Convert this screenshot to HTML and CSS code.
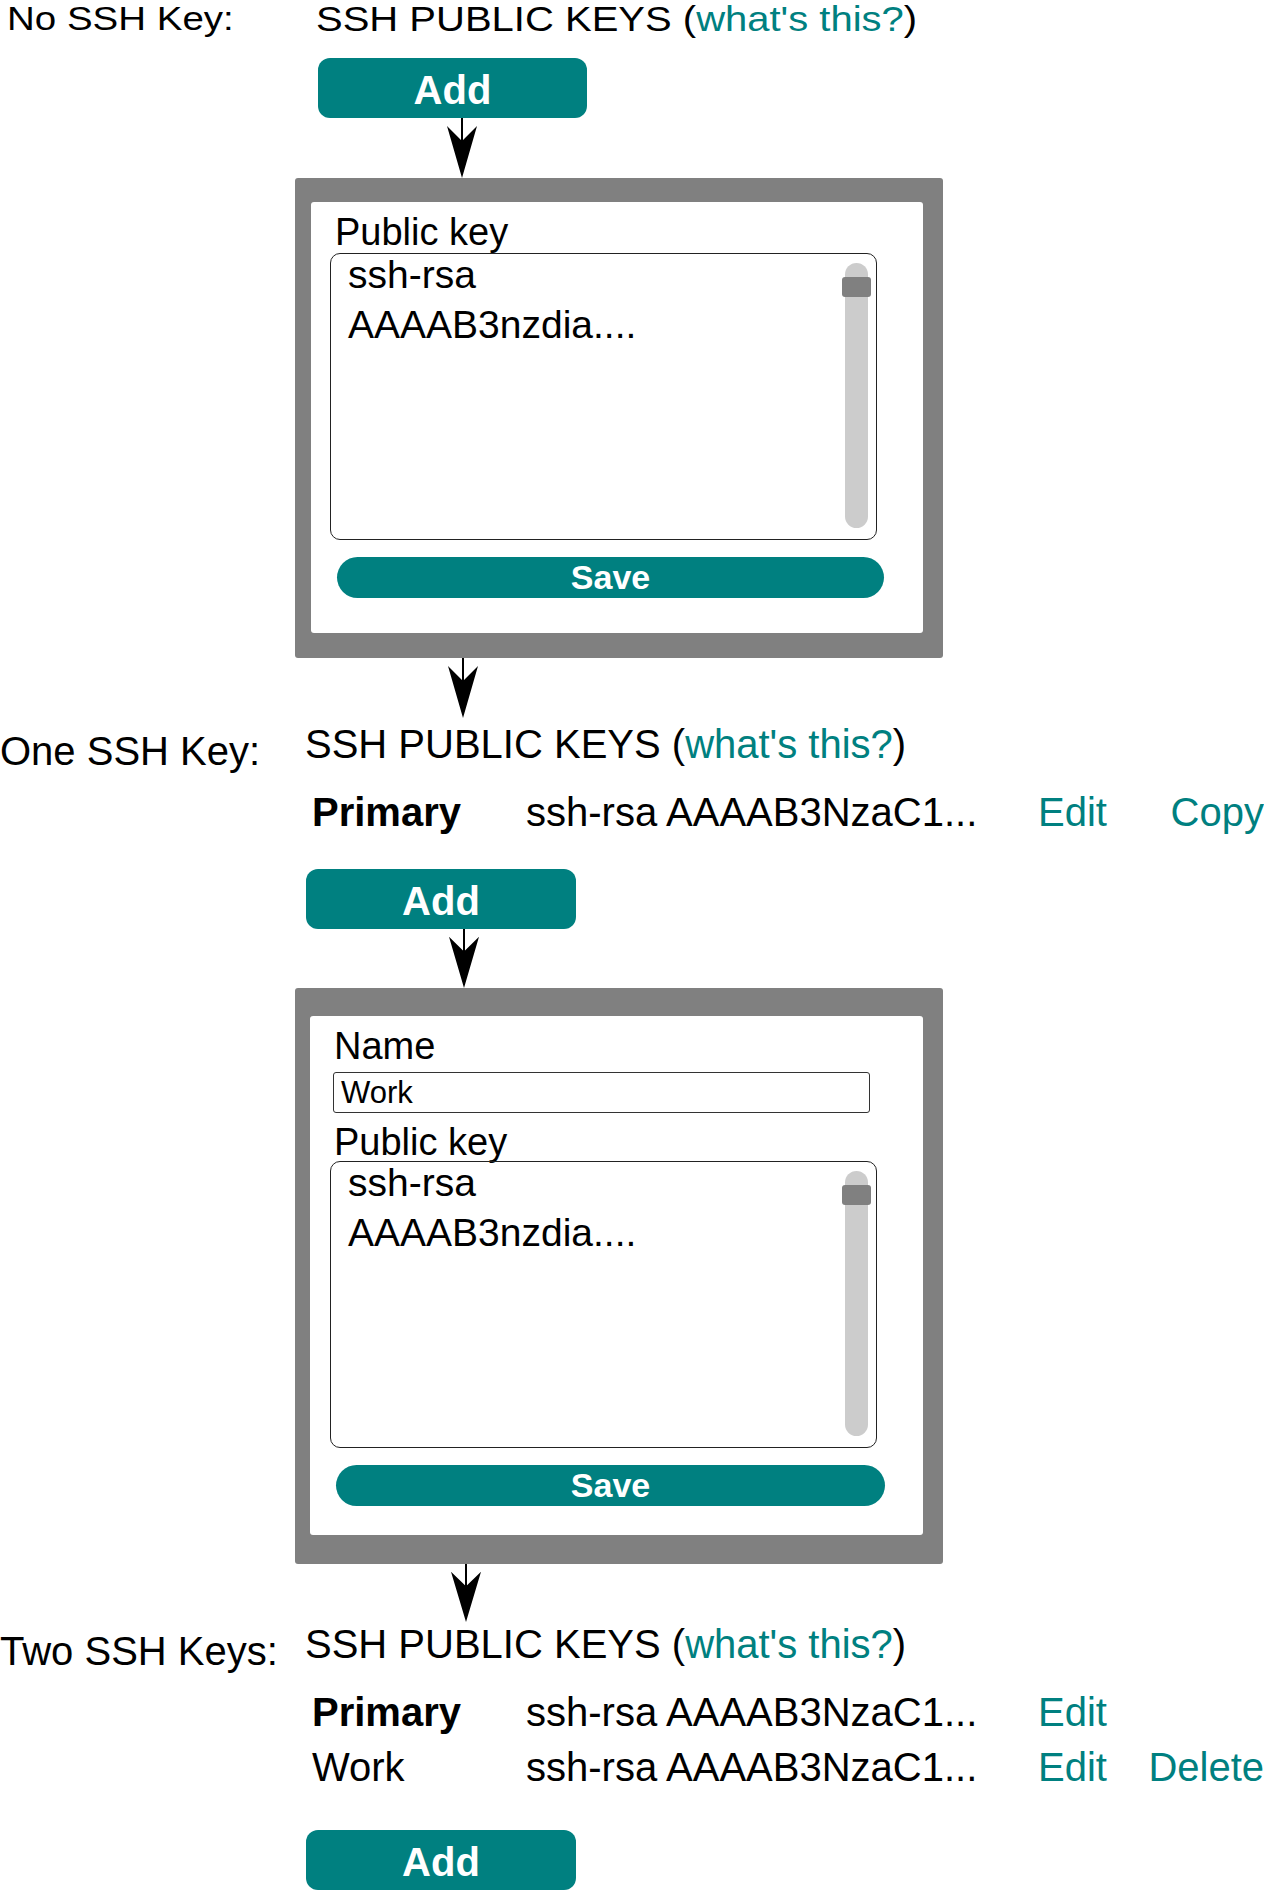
FILE: index.html
```html
<!DOCTYPE html>
<html lang="en">
<head>
<meta charset="utf-8">
<title>SSH public keys – states</title>
<link rel="stylesheet" href="styles.css">
</head>
<body>
<main class="page">

  <section class="state state--none">
    <div class="state-head">
      <span class="state-label">No SSH Key:</span>
      <h2 class="keys-title">SSH PUBLIC KEYS (<a class="link" href="#">what's this?</a>)</h2>
    </div>
    <button class="btn-add" type="button">Add</button>
    <svg class="arrow arrow--a" viewBox="0 0 32 60" preserveAspectRatio="none" aria-hidden="true">
      <line x1="16" y1="0" x2="16" y2="26" stroke="#000" stroke-width="2"/>
      <polygon points="16,60 1,8 16,23 31,8" fill="#000"/>
    </svg>
    <div class="dialog dialog--key">
      <div class="dialog-body">
        <label class="field-label field-label--first">Public key</label>
        <div class="keybox">
          <div class="keybox-text">
            <div class="keybox-line">ssh-rsa</div>
            <div class="keybox-line keybox-line--next">AAAAB3nzdia....</div>
          </div>
          <div class="scroll-track"><div class="scroll-thumb"></div></div>
        </div>
        <button class="btn-save" type="button">Save</button>
      </div>
    </div>
    <svg class="arrow arrow--b" viewBox="0 0 32 60" preserveAspectRatio="none" aria-hidden="true">
      <line x1="16" y1="0" x2="16" y2="26" stroke="#000" stroke-width="2"/>
      <polygon points="16,60 1,8 16,23 31,8" fill="#000"/>
    </svg>
  </section>

  <section class="state state--one">
    <div class="state-head">
      <span class="state-label">One SSH Key:</span>
      <h2 class="keys-title">SSH PUBLIC KEYS (<a class="link" href="#">what's this?</a>)</h2>
    </div>
    <div class="key-list">
      <div class="key-row">
        <span class="key-name key-name--primary">Primary</span>
        <span class="key-value">ssh-rsa AAAAB3NzaC1...</span>
        <a class="key-action" href="#">Edit</a>
        <a class="key-action key-action--end" href="#">Copy</a>
      </div>
    </div>
    <button class="btn-add btn-add--list" type="button">Add</button>
    <svg class="arrow arrow--c" viewBox="0 0 32 60" preserveAspectRatio="none" aria-hidden="true">
      <line x1="16" y1="0" x2="16" y2="26" stroke="#000" stroke-width="2"/>
      <polygon points="16,60 1,8 16,23 31,8" fill="#000"/>
    </svg>
    <div class="dialog dialog--named">
      <div class="dialog-body dialog-body--named">
        <label class="field-label">Name</label>
        <div class="name-input">Work</div>
        <label class="field-label field-label--key">Public key</label>
        <div class="keybox keybox--named">
          <div class="keybox-text">
            <div class="keybox-line">ssh-rsa</div>
            <div class="keybox-line keybox-line--next">AAAAB3nzdia....</div>
          </div>
          <div class="scroll-track"><div class="scroll-thumb"></div></div>
        </div>
        <button class="btn-save" type="button">Save</button>
      </div>
    </div>
    <svg class="arrow arrow--d" viewBox="0 0 32 60" preserveAspectRatio="none" aria-hidden="true">
      <line x1="16" y1="0" x2="16" y2="26" stroke="#000" stroke-width="2"/>
      <polygon points="16,60 1,8 16,23 31,8" fill="#000"/>
    </svg>
  </section>

  <section class="state state--two">
    <div class="state-head">
      <span class="state-label">Two SSH Keys:</span>
      <h2 class="keys-title">SSH PUBLIC KEYS (<a class="link" href="#">what's this?</a>)</h2>
    </div>
    <div class="key-list">
      <div class="key-row">
        <span class="key-name key-name--primary">Primary</span>
        <span class="key-value">ssh-rsa AAAAB3NzaC1...</span>
        <a class="key-action" href="#">Edit</a>
      </div>
      <div class="key-row">
        <span class="key-name">Work</span>
        <span class="key-value">ssh-rsa AAAAB3NzaC1...</span>
        <a class="key-action" href="#">Edit</a>
        <a class="key-action key-action--end" href="#">Delete</a>
      </div>
    </div>
    <button class="btn-add btn-add--list btn-add--last" type="button">Add</button>
  </section>

</main>
</body>
</html>
```

FILE: styles.css
```css
* { box-sizing: border-box; }

html, body {
  margin: 0;
  padding: 0;
  background: #fff;
}

body {
  width: 1264px;
  height: 1890px;
  overflow: hidden;
  font-family: "Liberation Sans", Arial, Helvetica, sans-serif;
  color: #000;
}

.page {
  display: flex;
  flex-direction: column;
}

.state {
  display: flex;
  flex-direction: column;
  align-items: flex-start;
}

/* ---------- header row ---------- */
.state-head {
  display: flex;
  align-items: flex-start;
  height: 40px;
  white-space: nowrap;
}

.state-label {
  width: 305px;
  padding-top: 7px;
  font-size: 40px;
  line-height: 40px;
}

.keys-title {
  margin: 0;
  font-weight: normal;
  font-size: 40px;
  line-height: 40px;
}

.link {
  color: #008080;
  text-decoration: none;
}

/* the first state's heading is drawn a little flatter in the mock-up */
.state--none .state-head {
  padding-left: 7px;
  transform: scaleY(0.86);
  transform-origin: top left;
}
.state--none .state-label {
  width: 309px;
  padding-top: 0;
  font-size: 38.5px;
  line-height: 43px;
}
.state--none .keys-title {
  font-size: 40px;
  line-height: 45px;
}

.state--one .state-head { margin-top: 6px; }
.state--two .state-head { margin-top: 2px; }

/* ---------- key list ---------- */
.key-list {
  display: flex;
  flex-direction: column;
  gap: 15px;
  width: 952px;
  margin: 28px 0 0 312px;
}

.key-row {
  display: flex;
  font-size: 40px;
  line-height: 40px;
  white-space: nowrap;
}

.key-name { width: 214px; }
.key-name--primary { font-weight: bold; }
.key-value { width: 512px; }

.key-action {
  color: #008080;
  text-decoration: none;
}
.key-action--end { margin-left: auto; }

/* ---------- buttons ---------- */
.btn-add {
  display: block;
  width: 269px;
  height: 60px;
  margin: 18px 0 0 318px;
  padding: 4px 0 0;
  border: none;
  border-radius: 12px;
  background: #008080;
  color: #fff;
  font-family: inherit;
  font-weight: bold;
  font-size: 40px;
  line-height: 56px;
  text-align: center;
}

.btn-add--list {
  width: 270px;
  margin: 37px 0 0 306px;
}
.btn-add--last { margin-top: 43px; }

.btn-save {
  display: block;
  width: 547px;
  height: 41px;
  margin: 17px 0 0 26px;
  padding: 0;
  border: none;
  border-radius: 21px;
  background: #008080;
  color: #fff;
  font-family: inherit;
  font-weight: bold;
  font-size: 34px;
  line-height: 41px;
  text-align: center;
}

.dialog-body--named .btn-save {
  width: 549px;
  margin-left: 25px;
}

/* ---------- arrows ---------- */
.arrow {
  display: block;
  width: 32px;
  height: 60px;
}
.arrow--a { margin-left: 446px; }
.arrow--b { margin-left: 447px; }
.arrow--c { margin-left: 448px; height: 59px; }
.arrow--d { margin-left: 450px; height: 58px; }

/* ---------- dialog frame ---------- */
.dialog {
  width: 648px;
  margin-left: 295px;
  padding: 24px 20px 25px 16px;
  background: #808080;
  border-radius: 3px;
}

.dialog--named {
  padding: 28px 20px 29px 15px;
}

.dialog-body {
  display: flex;
  flex-direction: column;
  align-items: flex-start;
  padding: 13px 0 35px;
  background: #fff;
  border-radius: 3px;
}

.dialog-body--named {
  padding: 12px 0 29px 1px;
}

.field-label {
  display: block;
  margin-left: 23px;
  font-size: 38px;
  line-height: 36px;
  white-space: nowrap;
}

.field-label--first {
  margin-left: 24px;
  line-height: 34px;
}

.field-label--key {
  margin-top: 11px;
}

.name-input {
  width: 537px;
  height: 41px;
  margin: 8px 0 0 22px;
  padding: 0 0 0 7px;
  border: 1px solid #333;
  border-radius: 3px;
  font-size: 31px;
  line-height: 39px;
}

/* ---------- key text box ---------- */
.keybox {
  display: flex;
  width: 547px;
  height: 287px;
  margin: 4px 0 0 19px;
  border: 1px solid #222;
  border-radius: 10px;
}

.keybox--named { margin-top: 1px; }

.keybox-text {
  flex: 1;
  padding-left: 17px;
  font-size: 39px;
  white-space: nowrap;
}

.keybox-line { line-height: 42px; }
.keybox-line--next { margin-top: 8px; }

.scroll-track {
  width: 23px;
  margin: 9px 8px 11px 0;
  background: #ccc;
  border-radius: 12px;
}

.scroll-thumb {
  height: 20px;
  margin: 14px -3px 0;
  background: #808080;
  border-radius: 3px;
}
```
